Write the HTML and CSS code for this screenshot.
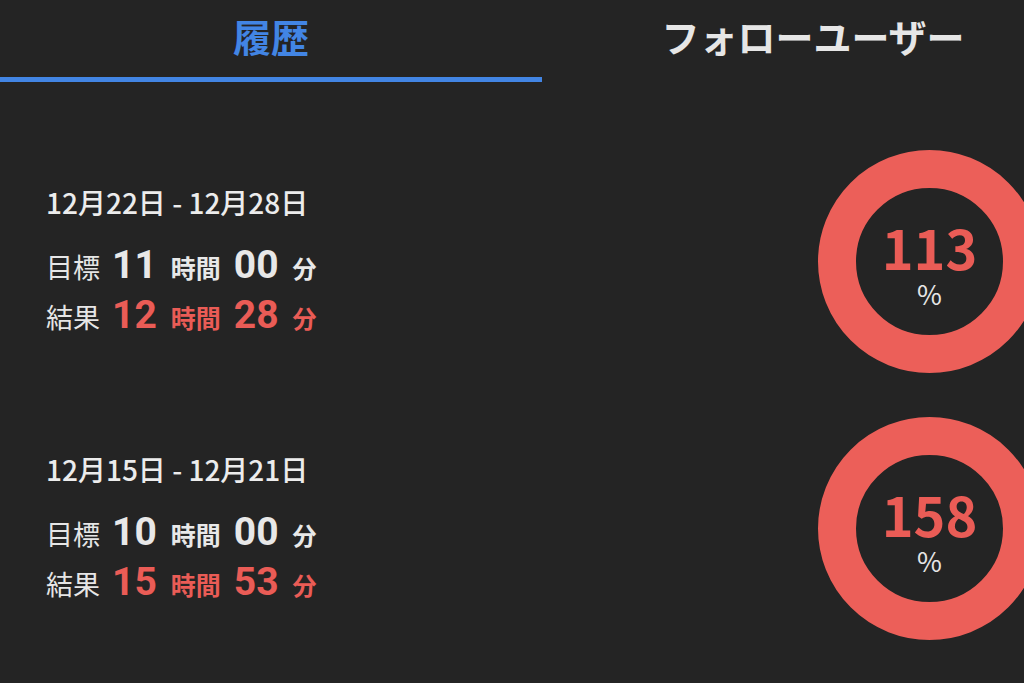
FILE: index.html
```html
<!DOCTYPE html>
<html lang="ja">
<head>
<meta charset="utf-8">
<link rel="stylesheet" href="styles.css">
</head>
<body>
<div class="page">
  <div class="tabs">
    <div class="tab active">履歴</div>
    <div class="tab">フォローユーザー</div>
  </div>
  <div class="list">
    <div class="item">
      <div class="info">
        <div class="date">12月22日 - 12月28日</div>
        <div class="row"><span class="label">目標</span><span class="num">11</span><span class="unit">時間</span><span class="num">00</span><span class="unit small">分</span></div>
        <div class="row result"><span class="label">結果</span><span class="num">12</span><span class="unit">時間</span><span class="num">28</span><span class="unit small">分</span></div>
      </div>
      <div class="ring"><div class="pct">113</div><div class="sign">%</div></div>
    </div>
    <div class="item">
      <div class="info">
        <div class="date">12月15日 - 12月21日</div>
        <div class="row"><span class="label">目標</span><span class="num">10</span><span class="unit">時間</span><span class="num">00</span><span class="unit small">分</span></div>
        <div class="row result"><span class="label">結果</span><span class="num">15</span><span class="unit">時間</span><span class="num">53</span><span class="unit small">分</span></div>
      </div>
      <div class="ring"><div class="pct">158</div><div class="sign">%</div></div>
    </div>
  </div>
</div>
</body>
</html>
```

FILE: styles.css
```css
html, body {
  margin: 0;
  padding: 0;
  background: #242424;
  overflow: hidden;
  width: 1024px;
  height: 683px;
}
.page {
  width: 1084px;
  font-family: "Noto Sans CJK JP", "Noto Sans", sans-serif;
  color: #e8e8e8;
}
.tabs {
  display: flex;
  height: 82px;
}
.tab {
  flex: 1;
  text-align: center;
  font-size: 38px;
  font-weight: 700;
  line-height: 72px;
  height: 77px;
  color: #e6e6e6;
}
.tab.active {
  color: #4285e4;
  border-bottom: 5px solid #4285e4;
}
.list {
  padding-top: 46px;
}
.item {
  height: 267px;
  display: flex;
  align-items: center;
  justify-content: space-between;
  padding: 0 43px 0 46px;
}
.info {
  display: flex;
  flex-direction: column;
}
.date {
  font-size: 28px;
  font-weight: 500;
  line-height: 36px;
  margin-bottom: 20px;
  color: #ececec;
}
.row {
  display: flex;
  align-items: baseline;
  height: 50px;
  line-height: 50px;
}
.label {
  font-size: 27px;
  font-weight: 400;
  margin-right: 12px;
  color: #e6e6e6;
}
.num {
  font-family: Roboto, "Noto Sans", sans-serif;
  font-size: 39px;
  font-weight: 700;
  margin-right: 14px;
}
.unit {
  font-size: 25px;
  font-weight: 700;
  margin-right: 13px;
}
.unit.small {
  font-size: 24px;
}
.result {
  color: #ea5c56;
}
.result .label {
  color: #e6e6e6;
}
.ring {
  width: 223px;
  height: 223px;
  box-sizing: border-box;
  border: 38px solid #ec5f59;
  border-radius: 50%;
  display: flex;
  flex-direction: column;
  align-items: center;
  justify-content: center;
}
.pct {
  font-size: 54px;
  font-weight: 700;
  line-height: 54px;
  color: #ea5c56;
  margin-top: 6px;
}
.sign {
  font-size: 27px;
  line-height: 30px;
  color: #e6e6e6;
  margin-top: 5px;
}
```
